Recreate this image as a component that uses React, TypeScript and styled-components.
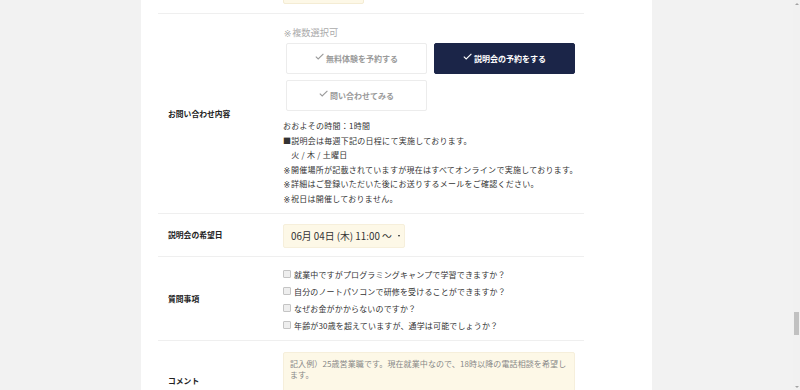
import styled, { createGlobalStyle } from 'styled-components';

const GlobalStyle = createGlobalStyle`
	html, body {
		margin: 0;
		padding: 0;
		height: 390px;
		overflow: hidden;
		background: #f2f2f2;
	}
	body {
		font-family: "Noto Sans CJK JP", "Noto Sans", sans-serif;
		color: #333;
	}
`;

const infoLines: { kome?: boolean; text: string }[] = [
	{ text: 'おおよその時間：1時間' },
	{ text: '■説明会は毎週下記の日程にて実施しております。' },
	{ text: '\u3000火 / 木 / 土曜日' },
	{ kome: true, text: '開催場所が記載されていますが現在はすべてオンラインで実施しております。' },
	{ kome: true, text: '詳細はご登録いただいた後にお送りするメールをご確認ください。' },
	{ kome: true, text: '祝日は開催しておりません。' },
];

const questions = [
	'就業中ですがプログラミングキャンプで学習できますか？',
	'自分のノートパソコンで研修を受けることができますか？',
	'なぜお金がかからないのですか？',
	'年齢が30歳を超えていますが、通学は可能でしょうか？',
];

const choices = [
	{ label: '無料体験を予約する', active: false },
	{ label: '説明会の予約をする', active: true },
	{ label: '問い合わせてみる', active: false },
];

function Check({ color }: { color: string }) {
	return (
		<CheckIcon width="9" height="7" viewBox="0 0 9 7">
			<polyline points="0.8,3.6 3.2,6 8.4,0.8" fill="none" stroke={color} strokeWidth="1.1" />
		</CheckIcon>
	);
}

function App() {
	return (
		<>
			<GlobalStyle />
			<Page>
				<Main>
					<Panel>
						<Form>
							<Row>
								<Label />
								<TopContent>
									<CreamInput />
								</TopContent>
							</Row>

							<Row>
								<Label>お問い合わせ内容</Label>
								<InquiryContent>
									<Note><Kome>※</Kome>複数選択可</Note>
									<ChoiceGrid>
										{choices.map((c) => (
											<Choice key={c.label} $active={c.active}>
												<Check color={c.active ? '#ffffff' : '#9a9a9a'} />
												{c.label}
											</Choice>
										))}
									</ChoiceGrid>
									<Info>
										{infoLines.map((l) => (
											<InfoLine key={l.text}>
												{l.kome && <Kome>※</Kome>}
												{l.text}
											</InfoLine>
										))}
									</Info>
								</InquiryContent>
							</Row>

							<Row>
								<Label>説明会の希望日</Label>
								<DateContent>
									<Select>
										<span>06月 04日 (木) 11:00 ～</span>
										<Caret />
									</Select>
								</DateContent>
							</Row>

							<Row>
								<Label>質問事項</Label>
								<QuestionContent>
									{questions.map((q) => (
										<Question key={q}>
											<Box />
											{q}
										</Question>
									))}
								</QuestionContent>
							</Row>

							<Row>
								<Label>コメント</Label>
								<CommentContent>
									<TextArea>
										記入例）25歳営業職です。現在就業中なので、18時以降の電話相談を希望します。
									</TextArea>
								</CommentContent>
							</Row>
						</Form>
					</Panel>
				</Main>
				<ScrollBar>
					<Arrow $up />
					<Track>
						<Thumb />
					</Track>
					<Arrow />
				</ScrollBar>
			</Page>
		</>
	);
}

const Page = styled.div`
	display: flex;
	height: 390px;
	overflow: hidden;
`;

const Main = styled.div`
	flex: 1;
	display: flex;
	justify-content: center;
	background: #f2f2f2;
`;

const Panel = styled.div`
	width: 511px;
	background: #ffffff;
	padding-left: 17px;
	box-sizing: border-box;
`;

const Form = styled.div`
	width: 426px;
	margin-top: -36px;
`;

const Row = styled.div`
	display: grid;
	grid-template-columns: 125px 1fr;
	align-items: center;
	border-bottom: 1px solid #efefef;
`;

const Label = styled.div`
	padding-left: 10px;
	font-size: 7.8px;
	font-weight: 700;
	color: #222;
`;

// reference mark, kept out of the colour emoji font
const Kome = styled.span`
	display: inline-block;
	width: 1em;
	height: 1em;
	line-height: 1;
	vertical-align: -0.1em;
	text-align: center;
	font-family: "DejaVu Sans", sans-serif;
`;

const TopContent = styled.div`
	padding: 10px 0 9px;
`;

const CreamInput = styled.div`
	width: 81px;
	height: 30px;
	background: #fdf8e7;
	border: 1px solid #f4ecd4;
	border-radius: 2px;
	box-sizing: border-box;
`;

const InquiryContent = styled.div`
	padding: 11px 0 6px;
`;

const Note = styled.div`
	height: 14px;
	font-size: 9.2px;
	line-height: 14px;
	color: #aaa;
`;

const ChoiceGrid = styled.div`
	display: grid;
	grid-template-columns: 141px 141px;
	column-gap: 7px;
	row-gap: 6px;
	margin: 4px 0 0 3px;
`;

const Choice = styled.div<{ $active: boolean }>`
	height: 31px;
	display: flex;
	align-items: center;
	justify-content: center;
	gap: 2px;
	box-sizing: border-box;
	border-radius: 2px;
	font-size: 8px;
	font-weight: 700;
	background: ${(p) => (p.$active ? '#1b2548' : '#ffffff')};
	color: ${(p) => (p.$active ? '#ffffff' : '#9a9a9a')};
	border: 1px solid ${(p) => (p.$active ? '#1b2548' : '#ececec')};
`;

const CheckIcon = styled.svg`
	margin-top: -4px;
`;

const Info = styled.div`
	margin-top: 8px;
	font-size: 8px;
	letter-spacing: 0.26px;
	color: #333;
`;

const InfoLine = styled.div`
	height: 14.6px;
	line-height: 14.6px;
	white-space: nowrap;
`;

const DateContent = styled.div`
	padding: 10px 0 8px;
`;

const Select = styled.div`
	width: 122px;
	height: 24px;
	box-sizing: border-box;
	display: flex;
	align-items: center;
	padding-left: 7px;
	background: #fdf8e7;
	border: 1px solid #f6efdb;
	border-radius: 2px;
	font-size: 9.8px;
	color: #333;
	white-space: nowrap;
	position: relative;
`;

const Caret = styled.span`
	position: absolute;
	right: 4px;
	top: 10px;
	width: 0;
	height: 0;
	border-left: 1.5px solid transparent;
	border-right: 1.5px solid transparent;
	border-top: 2.5px solid #222;
`;

const QuestionContent = styled.div`
	padding: 9px 0 6px;
`;

const Question = styled.div`
	display: flex;
	align-items: center;
	height: 17px;
	font-size: 8px;
	letter-spacing: 0.15px;
	color: #333;
`;

const Box = styled.span`
	width: 6px;
	height: 6px;
	margin-right: 3px;
	border: 1px solid #c4c4c4;
	background: #eeeeee;
	border-radius: 1px;
`;

const CommentContent = styled.div`
	padding: 11px 0;
`;

const TextArea = styled.div`
	width: 292px;
	height: 58px;
	box-sizing: border-box;
	padding: 5px 6px;
	background: #fdf8e7;
	border: 1px solid #f6efdb;
	border-radius: 2px;
	font-size: 8px;
	line-height: 11.5px;
	letter-spacing: 0.1px;
	color: #888;
`;

const ScrollBar = styled.div`
	width: 7px;
	display: flex;
	flex-direction: column;
	background: #f1f1f1;
`;

const Track = styled.div`
	flex: 1;
	padding-top: 305px;
`;

const Thumb = styled.div`
	width: 5px;
	height: 23px;
	margin-left: 1px;
	background: #c1c1c1;
`;

const Arrow = styled.div<{ $up?: boolean }>`
	height: 7px;
	display: flex;
	align-items: center;
	justify-content: center;
	&::after {
		content: '';
		width: 0;
		height: 0;
		border-left: 2px solid transparent;
		border-right: 2px solid transparent;
		${(p) => (p.$up ? 'border-bottom: 2px solid #a3a3a3;' : 'border-top: 2px solid #a3a3a3;')}
	}
`;

export default App;
